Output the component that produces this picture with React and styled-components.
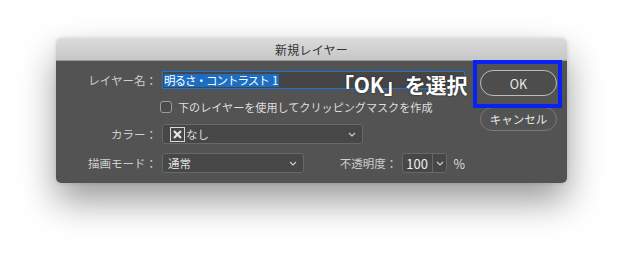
import React from "react";
import styled, { createGlobalStyle } from "styled-components";

const GlobalStyle = createGlobalStyle`
  html, body {
    margin: 0;
    padding: 0;
    background: #ffffff;
  }
  body {
    font-family: "Noto Sans CJK JP", "Noto Sans", sans-serif;
  }
`;

const Page = styled.div`
  width: 623px;
  height: 258px;
  padding: 38px 0 0 56px;
  box-sizing: border-box;
  background: #fff;
`;

const Dialog = styled.div`
  width: 511px;
  height: 145px;
  border-radius: 5px;
  overflow: hidden;
  display: flex;
  flex-direction: column;
  box-shadow: 0 18px 36px rgba(0, 0, 0, 0.4), 0 0 4px rgba(0, 0, 0, 0.12);
`;

const TitleBar = styled.div`
  height: 23px;
  display: flex;
  align-items: center;
  justify-content: center;
  background: linear-gradient(#dcdcdc, #c6c6c6);
  border-bottom: 1px solid #9a9a9a;
  color: #333;
  font-size: 12px;
  letter-spacing: 0.2px;
`;

const Body = styled.div`
  flex: 1;
  background: #535353;
  display: grid;
  grid-template-columns: 409px 77px;
  column-gap: 15px;
  padding: 9px 10px 10px 0;
`;

const Form = styled.div`
  display: flex;
  flex-direction: column;
  padding-top: 1px;
`;

const Row = styled.div`
  display: flex;
  align-items: center;
  height: ${(p) => p.$h}px;
  margin-top: ${(p) => p.$mt || 0}px;
`;

const Label = styled.div`
  width: 101px;
  margin-right: 5px;
  text-align: right;
  color: #cfcfcf;
  font-size: 11.5px;
  white-space: nowrap;
  flex-shrink: 0;
`;

const Spacer = styled.div`
  width: ${(p) => p.$w}px;
  flex-shrink: 0;
`;

const NameInput = styled.div`
  width: 303px;
  height: 18px;
  box-sizing: border-box;
  border: 1px solid #1a72d2;
  background: #454545;
  display: flex;
  align-items: center;
  padding-left: 1px;
`;

const Selected = styled.span`
  background: #1d6ec2;
  color: #fff;
  font-size: 11.5px;
  line-height: 13px;
  letter-spacing: -1px;
  padding-right: 2px;
  white-space: pre;
`;

const CheckBox = styled.div`
  width: 12px;
  height: 12px;
  box-sizing: border-box;
  border: 1px solid #9c9c9c;
  border-radius: 3px;
  background: #4b4b4b;
  margin-right: 6px;
`;

const Text = styled.span`
  color: ${(p) => p.$color || "#dedede"};
  font-size: ${(p) => p.$size || 11.5}px;
  white-space: nowrap;
`;

const Select = styled.div`
  width: ${(p) => p.$w}px;
  height: 20px;
  box-sizing: border-box;
  border: 1px solid #686868;
  border-radius: 3px;
  background: #474747;
  display: flex;
  align-items: center;
  padding: 0 6px 0 5px;
  gap: 2px;
`;

const Grow = styled.div`
  flex: 1;
  display: flex;
  align-items: center;
  gap: 1px;
`;

const NoneIcon = styled.div`
  width: 15px;
  height: 15px;
  box-sizing: border-box;
  border: 1px solid #d8d8d8;
  display: flex;
  align-items: center;
  justify-content: center;
  margin-left: 2px;
`;

const OpacityBox = styled.div`
  margin-left: 5px;
  width: 47px;
  height: 20px;
  box-sizing: border-box;
  border: 1px solid #686868;
  border-radius: 3px;
  background: #474747;
  display: flex;
`;

const OpacityValue = styled.div`
  flex: 1;
  display: flex;
  align-items: center;
  padding-left: 3px;
  color: #eee;
  font-size: 13px;
  border-right: 1px solid #686868;
`;

const OpacityArrow = styled.div`
  width: 13px;
  display: flex;
  align-items: center;
  justify-content: center;
`;

const Buttons = styled.div`
  display: flex;
  flex-direction: column;
  gap: 11px;
`;

const ButtonWrap = styled.div`
  position: relative;
`;

const Button = styled.div`
  height: ${(p) => p.$h}px;
  box-sizing: border-box;
  border-radius: 13px;
  border: 1px solid ${(p) => (p.$primary ? "#bcbcbc" : "#7a7a7a")};
  background: ${(p) => (p.$primary ? "#4d4d4d" : "#535353")};
  display: flex;
  align-items: center;
  justify-content: center;
  color: #e8e8e8;
  font-size: ${(p) => (p.$primary ? 12.5 : 11.5)}px;
`;

const Highlight = styled.div`
  position: absolute;
  left: -7px;
  top: -10px;
  right: -5px;
  bottom: -12px;
  border: 4px solid #0622f5;
  pointer-events: none;
`;

const Annotation = styled.div`
  position: absolute;
  left: 277px;
  top: 31px;
  color: #fff;
  font-size: 21px;
  font-weight: 700;
  letter-spacing: -0.2px;
  white-space: nowrap;
  text-shadow: 0 0 2px rgba(40, 40, 40, 0.9), 0 0 1px rgba(40, 40, 40, 0.9);
`;

const Wrapper = styled.div`
  position: relative;
`;

const Chevron = () => (
  <svg width="8" height="5" viewBox="0 0 8 5">
    <path d="M1 1 L4 4 L7 1" fill="none" stroke="#cfcfcf" strokeWidth="1.1" />
  </svg>
);

export default function App() {
  return (
    <>
      <GlobalStyle />
      <Page>
        <Wrapper>
          <Dialog>
            <TitleBar>新規レイヤー</TitleBar>
            <Body>
              <Form>
                <Row $h={18}>
                  <Label>レイヤー名：</Label>
                  <NameInput>
                    <Selected>明るさ・コントラスト  1</Selected>
                  </NameInput>
                </Row>
                <Row $h={12} $mt={12}>
                  <Spacer $w={104} />
                  <CheckBox />
                  <Text $size={11.1}>下のレイヤーを使用してクリッピングマスクを作成</Text>
                </Row>
                <Row $h={20} $mt={11}>
                  <Label>カラー：</Label>
                  <Select $w={201}>
                    <Grow>
                      <NoneIcon>
                        <svg width="11" height="11" viewBox="0 0 11 11">
                          <path d="M2 2 L9 9 M9 2 L2 9" stroke="#e6e6e6" strokeWidth="2.2" />
                        </svg>
                      </NoneIcon>
                      <Text>なし</Text>
                    </Grow>
                    <Chevron />
                  </Select>
                </Row>
                <Row $h={20} $mt={9}>
                  <Label>描画モード：</Label>
                  <Select $w={147}>
                    <Grow>
                      <Text>通常</Text>
                    </Grow>
                    <Chevron />
                  </Select>
                  <Spacer $w={36} />
                  <Text $color="#cfcfcf">不透明度：</Text>
                  <OpacityBox>
                    <OpacityValue>100</OpacityValue>
                    <OpacityArrow>
                      <Chevron />
                    </OpacityArrow>
                  </OpacityBox>
                  <Spacer $w={6} />
                  <Text $size={12.5}>%</Text>
                </Row>
              </Form>
              <Buttons>
                <ButtonWrap>
                  <Button $primary $h={26}>OK</Button>
                  <Highlight />
                </ButtonWrap>
                <Button $h={24}>キャンセル</Button>
              </Buttons>
            </Body>
          </Dialog>
          <Annotation>「OK」を選択</Annotation>
        </Wrapper>
      </Page>
    </>
  );
}
